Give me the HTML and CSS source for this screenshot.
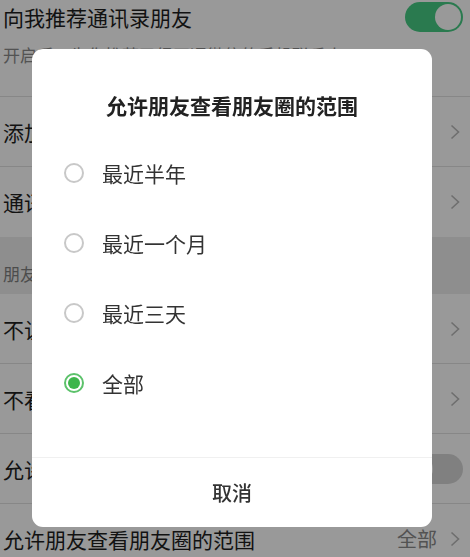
FILE: index.html
```html
<!DOCTYPE html>
<html lang="zh-CN">
<head>
<meta charset="utf-8">
<title>朋友权限</title>
<link rel="stylesheet" href="styles.css">
</head>
<body>
<div class="page">
  <div class="row row-first">
    <div class="row-main">
      <div class="row-title">向我推荐通讯录朋友</div>
      <div class="row-sub">开启后，为你推荐已经开通微信的手机联系人</div>
    </div>
    <span class="switch switch-on"><span class="knob"></span></span>
  </div>
  <div class="row">
    <div class="row-title">添加我的方式</div>
    <svg class="chev" viewBox="0 0 10 16"><polyline points="1.5,1.5 8.5,8 1.5,14.5"/></svg>
  </div>
  <div class="row row-last">
    <div class="row-title">通讯录黑名单</div>
    <svg class="chev" viewBox="0 0 10 16"><polyline points="1.5,1.5 8.5,8 1.5,14.5"/></svg>
  </div>
  <div class="section">朋友圈</div>
  <div class="row">
    <div class="row-title">不让他（她）看</div>
    <svg class="chev" viewBox="0 0 10 16"><polyline points="1.5,1.5 8.5,8 1.5,14.5"/></svg>
  </div>
  <div class="row">
    <div class="row-title">不看他（她）</div>
    <svg class="chev" viewBox="0 0 10 16"><polyline points="1.5,1.5 8.5,8 1.5,14.5"/></svg>
  </div>
  <div class="row">
    <div class="row-title">允许陌生人查看十条朋友圈</div>
    <span class="switch switch-off"><span class="knob"></span></span>
  </div>
  <div class="row">
    <div class="row-title">允许朋友查看朋友圈的范围</div>
    <span class="row-value">全部</span>
    <svg class="chev" viewBox="0 0 10 16"><polyline points="1.5,1.5 8.5,8 1.5,14.5"/></svg>
  </div>
</div>

<div class="mask"></div>

<div class="dialog">
  <div class="dialog-title">允许朋友查看朋友圈的范围</div>
  <div class="options">
    <div class="option"><span class="radio"></span><span class="option-label">最近半年</span></div>
    <div class="option"><span class="radio"></span><span class="option-label">最近一个月</span></div>
    <div class="option"><span class="radio"></span><span class="option-label">最近三天</span></div>
    <div class="option"><span class="radio radio-on"></span><span class="option-label">全部</span></div>
  </div>
  <div class="dialog-footer">取消</div>
</div>
</body>
</html>
```

FILE: styles.css
```css
* { box-sizing: border-box; }

html, body {
  margin: 0;
  padding: 0;
  background: #ffffff;
  font-family: "Noto Sans CJK SC", "Noto Sans", sans-serif;
  color: #1e1e1e;
  overflow: hidden;
}

.page {
  width: 470px;
  background: #ffffff;
}

.row {
  display: flex;
  align-items: center;
  height: 70px;
  padding: 0 10px 0 3px;
  border-bottom: 1px solid #e2e2e2;
}

.row-first {
  height: 97px;
  align-items: flex-start;
  padding-top: 2px;
  padding-right: 7px;
}

.row-last { border-bottom: none; }

.row-main {
  flex: 1;
  display: flex;
  flex-direction: column;
}

.row-title {
  flex: 1;
  font-size: 21px;
  line-height: 30px;
  white-space: nowrap;
}

.row-sub {
  margin-top: 10px;
  font-size: 17px;
  line-height: 26px;
  color: #8a8a8a;
  white-space: nowrap;
}

.row-value {
  font-size: 20px;
  color: #8a8a8a;
  margin-right: 13px;
}

.chev {
  width: 10px;
  height: 16px;
  fill: none;
  stroke: #b8b8b8;
  stroke-width: 1.6;
}

.switch {
  position: relative;
  width: 58px;
  height: 30px;
  border-radius: 15px;
  flex: none;
}

.switch-on { background: #46cc84; }
.switch-off { background: #d6d6d6; margin-right: -3px; }

.knob {
  position: absolute;
  top: 2px;
  width: 26px;
  height: 26px;
  border-radius: 50%;
  background: #ffffff;
}

.switch-on .knob { right: 2px; }
.switch-off .knob { left: 2px; }

.section {
  height: 57px;
  background: #ededed;
  padding: 25px 0 0 3px;
  font-size: 17px;
  line-height: 24px;
  color: #7f7f7f;
}

.mask {
  position: fixed;
  inset: 0;
  background: rgba(0, 0, 0, 0.4);
}

.dialog {
  position: absolute;
  left: 32px;
  top: 49px;
  width: 400px;
  height: 478px;
  background: #ffffff;
  border-radius: 11px;
  display: flex;
  flex-direction: column;
  overflow: hidden;
}

.dialog-title {
  padding: 40px 0 17px;
  line-height: 32px;
  font-size: 21px;
  font-weight: 700;
  color: #222222;
  text-align: center;
}

.options {
  display: flex;
  flex-direction: column;
  padding-bottom: 39px;
  border-bottom: 1px solid #f0f0f0;
}

.option {
  display: flex;
  align-items: center;
  height: 70px;
  padding-left: 32px;
  gap: 18px;
}

.radio {
  width: 20px;
  height: 20px;
  border-radius: 50%;
  border: 2px solid #c8c8c8;
  flex: none;
  position: relative;
}

.radio-on {
  border: 2px solid #5cc26b;
}

.radio-on::after {
  content: "";
  position: absolute;
  left: 2px;
  top: 2px;
  width: 12px;
  height: 12px;
  border-radius: 50%;
  background: #3db54b;
}

.option-label {
  font-size: 21px;
  line-height: 28px;
  color: #333333;
}

.dialog-footer {
  flex: 1;
  display: flex;
  align-items: center;
  justify-content: center;
  font-size: 20px;
  font-weight: 500;
  color: #333333;
}
```
